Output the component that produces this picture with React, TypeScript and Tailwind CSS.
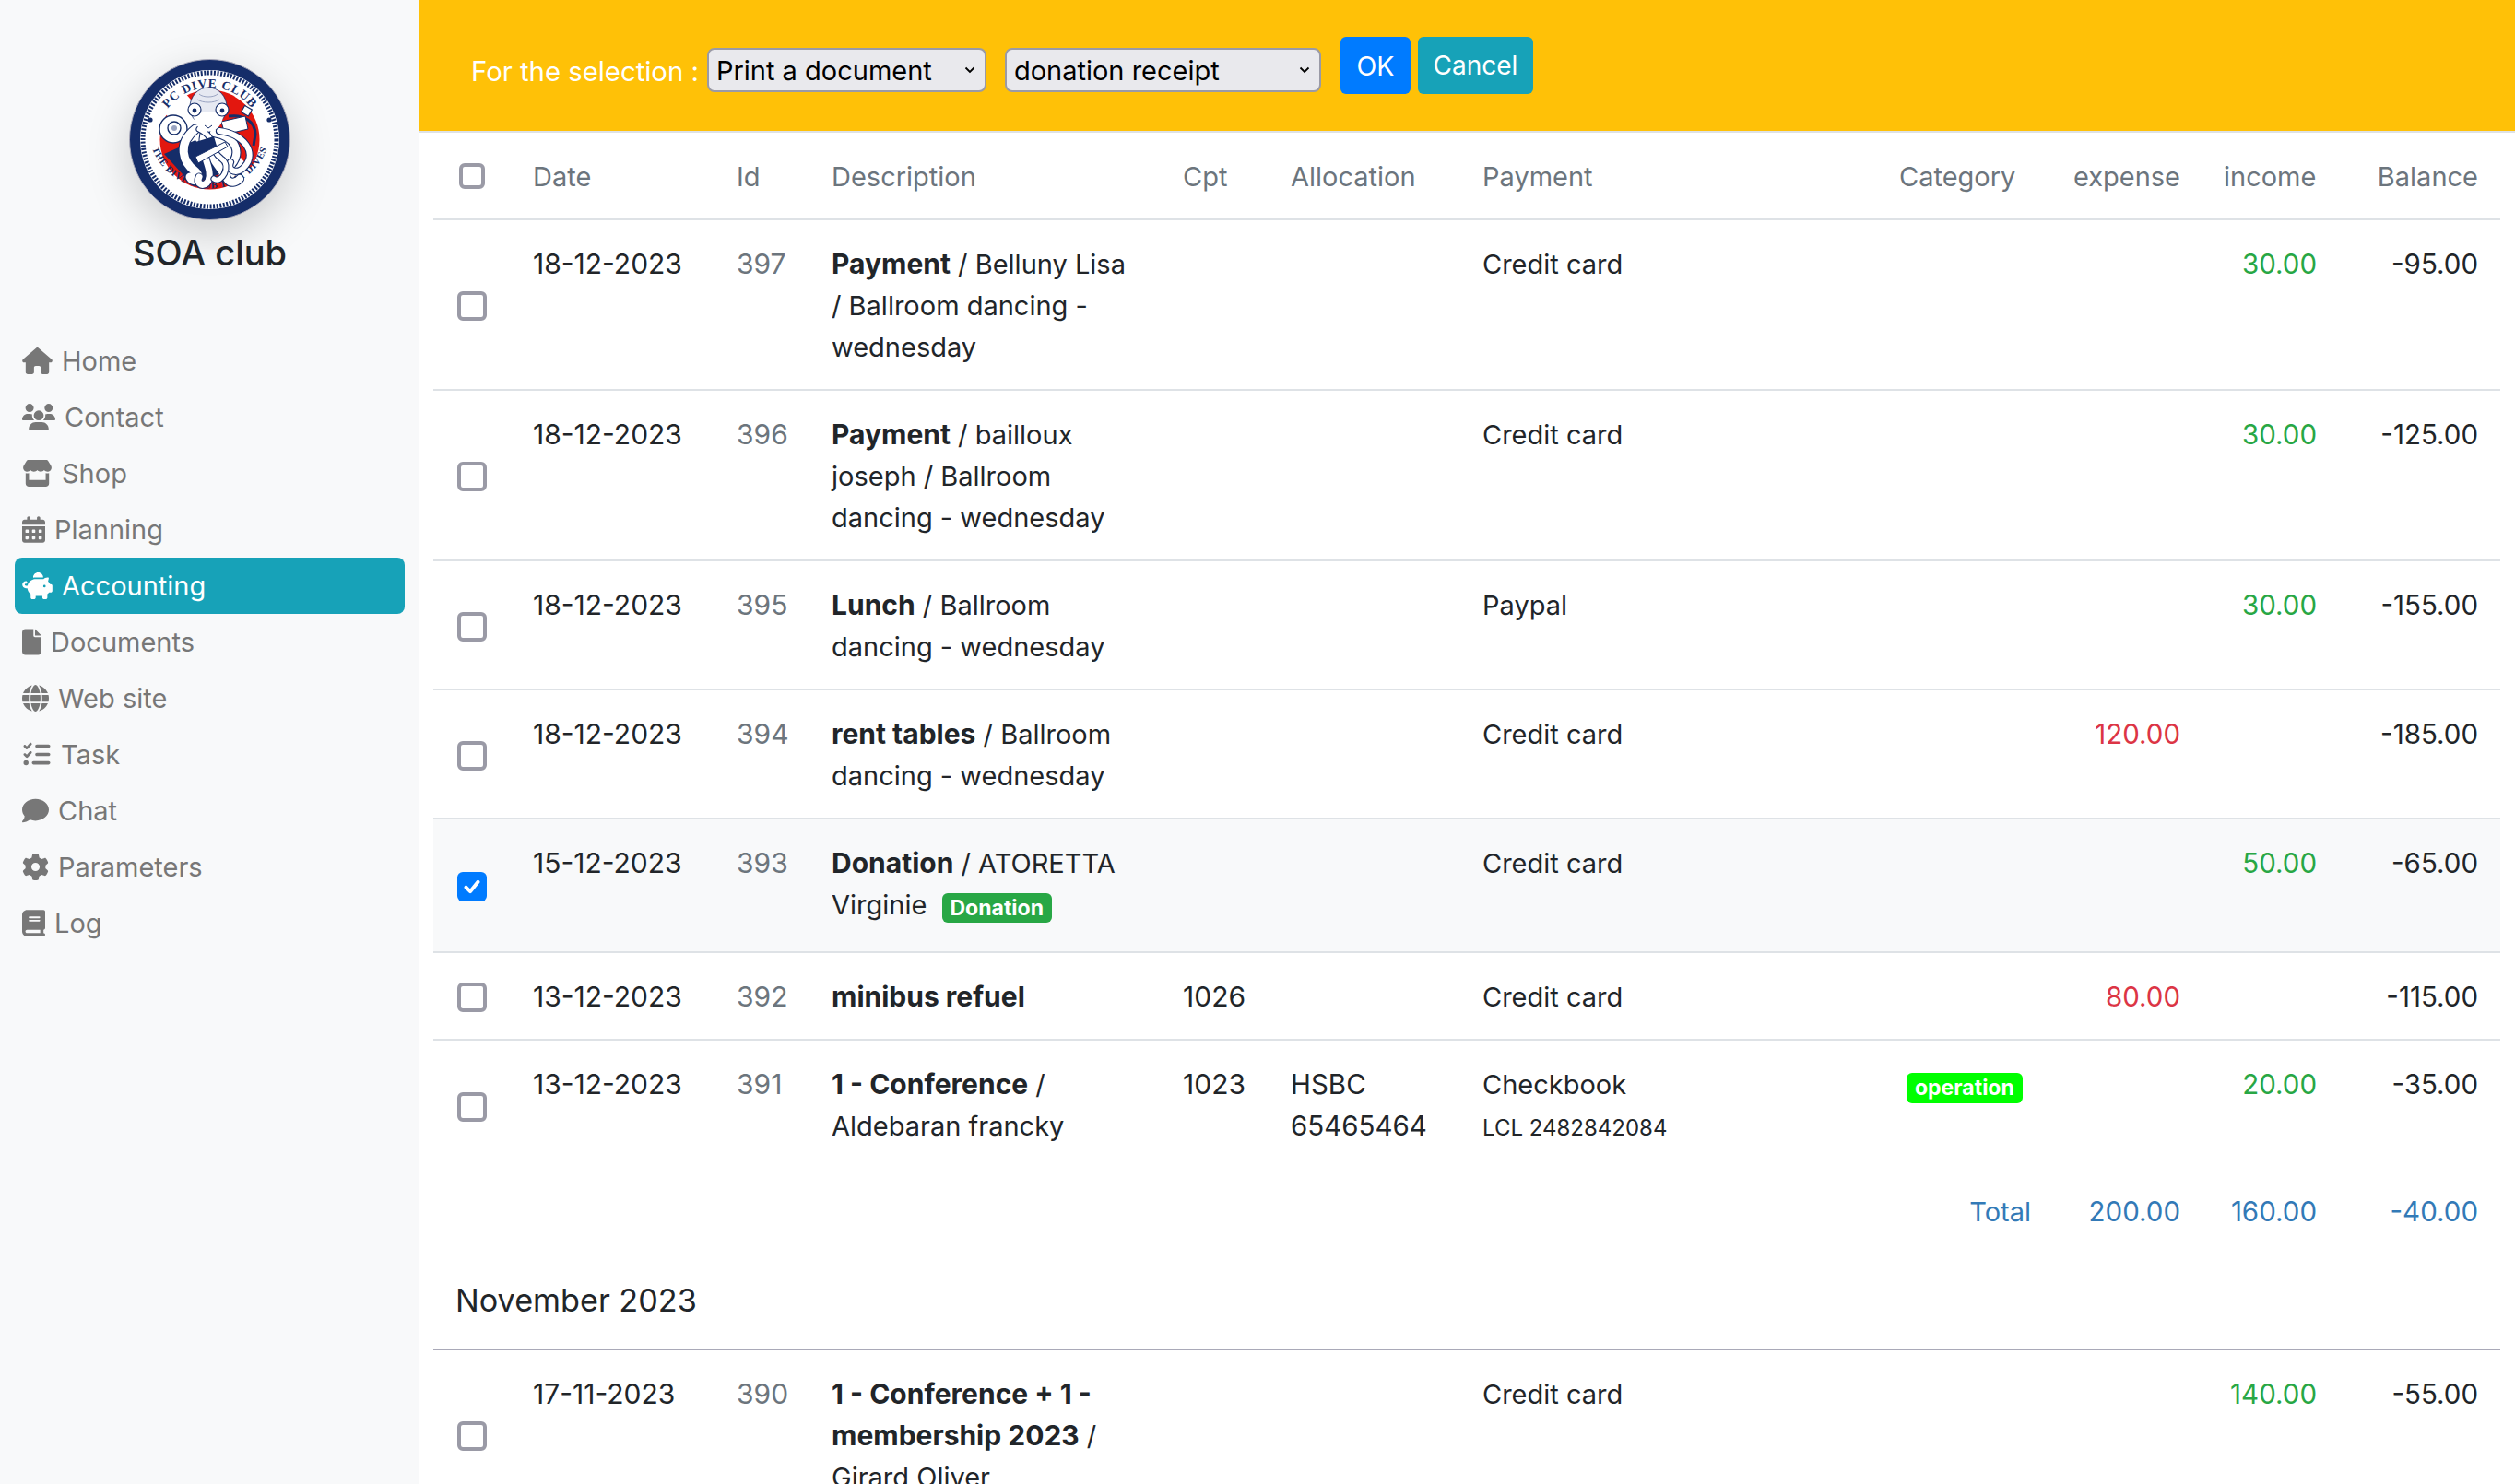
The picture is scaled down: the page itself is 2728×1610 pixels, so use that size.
import type { ReactNode } from "react";
import {
  FaHouse,
  FaUsers,
  FaStore,
  FaCalendarDays,
  FaPiggyBank,
  FaFile,
  FaGlobe,
  FaListCheck,
  FaComment,
  FaGear,
  FaBook,
} from "react-icons/fa6";

const NAV = [
  { label: "Home", icon: FaHouse, w: "w-[33px]" },
  { label: "Contact", icon: FaUsers, w: "w-[36px]" },
  { label: "Shop", icon: FaStore, w: "w-[33px]" },
  { label: "Planning", icon: FaCalendarDays, w: "w-[25px]" },
  { label: "Accounting", icon: FaPiggyBank, w: "w-[33px]", active: true },
  { label: "Documents", icon: FaFile, w: "w-[21px]" },
  { label: "Web site", icon: FaGlobe, w: "w-[29px]" },
  { label: "Task", icon: FaListCheck, w: "w-[32px]" },
  { label: "Chat", icon: FaComment, w: "w-[29px]" },
  { label: "Parameters", icon: FaGear, w: "w-[29px]" },
  { label: "Log", icon: FaBook, w: "w-[25px]" },
];

type Row = {
  date: string;
  id: number;
  desc: ReactNode;
  cpt?: string;
  alloc?: ReactNode;
  pay: ReactNode;
  cat?: ReactNode;
  expense?: string;
  income?: string;
  balance: string;
  checked?: boolean;
  noBorder?: boolean;
};

const B = "text-[30px] font-bold";
const CELL = "px-[24px] pt-[25px] pb-[23px]";
const NUM = "pl-[24px] pr-[23px] pt-[25px] pb-[23px] text-right text-[29.5px]";
const BAL = "pl-[24px] pr-[24px] pt-[25px] pb-[23px] text-right text-[29.5px]";

const ROWS: Row[] = [
  { date: "18-12-2023", id: 397, desc: <><b className={B}>Payment</b> / Belluny Lisa / Ballroom dancing - wednesday</>, pay: "Credit card", income: "30.00", balance: "-95.00" },
  { date: "18-12-2023", id: 396, desc: <><b className={B}>Payment</b> / bailloux joseph / Ballroom dancing - wednesday</>, pay: "Credit card", income: "30.00", balance: "-125.00" },
  { date: "18-12-2023", id: 395, desc: <><b className={B}>Lunch</b> / Ballroom dancing - wednesday</>, pay: "Paypal", income: "30.00", balance: "-155.00" },
  { date: "18-12-2023", id: 394, desc: <><b className={B}>rent tables</b> / Ballroom dancing - wednesday</>, pay: "Credit card", expense: "120.00", balance: "-185.00" },
  {
    date: "15-12-2023",
    id: 393,
    desc: (
      <div className="pb-[5px]">
        <b className={B}>Donation</b> / ATORETTA Virginie{" "}
        <span className="ml-[8px] inline-block rounded-[6px] bg-[#28a745] px-[9px] align-[-1px] text-[23px] leading-[32px] font-bold text-white">Donation</span>
      </div>
    ),
    pay: "Credit card",
    income: "50.00",
    balance: "-65.00",
    checked: true,
  },
  { date: "13-12-2023", id: 392, desc: <b className={B}>minibus refuel</b>, cpt: "1026", pay: "Credit card", expense: "80.00", balance: "-115.00" },
  {
    date: "13-12-2023",
    id: 391,
    desc: <><b className={B}>1 - Conference</b> / Aldebaran francky</>,
    cpt: "1023",
    alloc: <>HSBC<br />65465464</>,
    pay: <>Checkbook<br /><span className="text-[24px]">LCL 2482842084</span></>,
    cat: <span className="inline-block rounded-[6px] bg-[#00ff00] px-[9px] align-[-1px] text-[23px] leading-[33px] font-bold text-white">operation</span>,
    income: "20.00",
    balance: "-35.00",
    noBorder: true,
  },
];

function Box({ checked, small }: { checked?: boolean; small?: boolean }) {
  return (
    <span className={`flex items-center justify-center rounded-[6px] ${small ? "h-[28px] w-[28px]" : "h-[32px] w-[32px]"} ${checked ? "bg-[#007bff]" : "border-[4px] border-[#9a9aa6] bg-white"}`}>
      {checked && (
        <svg viewBox="0 0 20 20" className="h-[26px] w-[26px]" fill="none" stroke="white" strokeWidth="3" strokeLinecap="round" strokeLinejoin="round">
          <path d="M5 10.5l3.5 3.5L15 6" />
        </svg>
      )}
    </span>
  );
}

function Tentacle({ d, w = 9 }: { d: string; w?: number }) {
  return (
    <>
      <path d={d} fill="none" stroke="#152d69" strokeWidth={w + 2.2} strokeLinecap="round" />
      <path d={d} fill="none" stroke="#ffffff" strokeWidth={w} strokeLinecap="round" />
    </>
  );
}

function Logo() {
  return (
    <svg viewBox="0 0 175 175" className="h-[175px] w-[175px]">
      <defs>
        <path id="arcTop" d="M 32 75 A 57 57 0 0 1 143 75" />
        <path id="arcBottom" d="M 21.5 82 A 66.5 66.5 0 0 0 153.5 82" />
      </defs>
      <circle cx="87.5" cy="87.5" r="87" fill="#152d69" stroke="#a9a8b8" strokeWidth="1" />
      <circle cx="87.5" cy="87.5" r="75.5" fill="#ffffff" />
      <circle cx="87.5" cy="87.5" r="72.5" fill="none" stroke="#152d69" strokeWidth="5" strokeDasharray="2 1.6" />
      <circle cx="87.5" cy="87.5" r="54" fill="#e3170f" />
      <path d="M38 58 L60 36 L134 122 L112 142 Z" fill="#ffffff" />
      <path d="M38 103 L72 88 L98 125 L68 136 Z" fill="#152d69" />
      <text fontFamily="'Liberation Serif', serif" fontWeight="700" fontSize="13.5" fill="#152d69" letterSpacing="0.8">
        <textPath href="#arcTop" startOffset="50%" textAnchor="middle">PC DIVE CLUB</textPath>
      </text>
      <text fontFamily="'Liberation Serif', serif" fontWeight="700" fontSize="10.5" fill="#152d69" letterSpacing="0.5">
        <textPath href="#arcBottom" startOffset="50%" textAnchor="middle">THE DIVE CLUB THAT DIVES</textPath>
      </text>
      <circle cx="23" cy="66" r="2.6" fill="#152d69" />
      <circle cx="152" cy="66" r="2.6" fill="#152d69" />
      <circle cx="48" cy="76" r="15" fill="#ffffff" stroke="#152d69" strokeWidth="1.4" />
      <circle cx="49" cy="75" r="7" fill="#ffffff" stroke="#152d69" strokeWidth="1.4" />
      <circle cx="49" cy="75" r="3" fill="#9aa4c2" />
      <path d="M108 62 C125 60 137 68 137 82 L135 94" fill="none" stroke="#152d69" strokeWidth="3" />
      <path d="M100 68 L126 62 L129 76 L104 82 Z" fill="#ffffff" stroke="#152d69" strokeWidth="1" />
      <rect x="123" y="52" width="9" height="8" fill="#ffffff" stroke="#152d69" strokeWidth="1.2" transform="rotate(30 127 56)" />
      <Tentacle d="M72 76 C52 92 58 112 72 122 C80 130 70 136 66 128" w={9} />
      <Tentacle d="M82 78 C74 102 92 118 86 132 C82 140 72 136 76 128" w={7} />
      <Tentacle d="M92 80 C116 84 124 102 108 118 C100 128 110 140 120 130" w={8} />
      <Tentacle d="M98 78 C126 82 138 102 126 116 C118 126 106 122 110 112" w={6} />
      <Tentacle d="M76 76 C96 86 86 98 100 108 C112 116 100 136 92 130" w={5} />
      <path d="M72 90 L92 84 L96 98 L74 110 Z" fill="#152d69" />
      <path d="M72 106 L104 90 L107 95 L75 113 Z" fill="#ffffff" stroke="#152d69" strokeWidth="1" />
      <ellipse cx="86" cy="52" rx="20" ry="21" fill="#e6e9f2" stroke="#152d69" strokeWidth="0.8" />
      <path d="M70 62 C72 84 100 84 102 62 C96 56 76 56 70 62 Z" fill="#ffffff" />
      <path d="M76 38 C80 42 92 42 96 38 M74 44 C80 48 92 48 98 44" fill="none" stroke="#9aa4c2" strokeWidth="1" />
      <circle cx="71" cy="55" r="7" fill="#ffffff" stroke="#152d69" strokeWidth="1.2" />
      <circle cx="101" cy="55" r="7" fill="#ffffff" stroke="#152d69" strokeWidth="1.2" />
      <circle cx="71" cy="56" r="2.4" fill="#152d69" />
      <circle cx="101" cy="56" r="2.4" fill="#152d69" />
      <path d="M82 72 L86 75 L90 72" fill="none" stroke="#152d69" strokeWidth="1" />
    </svg>
  );
}

function Select({ value, width }: { value: string; width: string }) {
  return (
    <span className={`relative inline-block ${width}`}>
      <select
        defaultValue={value}
        className="h-[48px] w-full appearance-none rounded-[8px] border-[2px] border-[#9a9aa6] bg-[#e9e9ed] pt-[2px] pl-[8px] text-[29px] leading-[40px] text-black"
      >
        <option>{value}</option>
      </select>
      <svg viewBox="0 0 12 8" className="pointer-events-none absolute top-[20px] right-[12px] h-[8px] w-[12px]" fill="none" stroke="black" strokeWidth="1.8">
        <path d="M1.5 1.5L6 6l4.5-4.5" />
      </svg>
    </span>
  );
}

export default function App() {
  return (
    <div className="flex h-screen overflow-hidden bg-white font-['Inter',sans-serif] text-[29px] leading-[45px] text-[#212529]">
      <aside className="w-[455px] shrink-0 bg-[#f8f9fa]">
        <div className="flex flex-col items-center pt-[64px]">
          <div className="rounded-full shadow-[0_16px_48px_rgba(0,0,0,0.175)]">
            <Logo />
          </div>
          <h1 className="mt-[11px] text-[38px] leading-[48px] font-medium">SOA club</h1>
        </div>
        <nav className="mt-[63px] flex flex-col px-[16px]">
          {NAV.map((n) => (
            <a
              key={n.label}
              className={`flex h-[61px] items-center gap-[10px] rounded-[8px] px-[8px] text-[29px] ${n.active ? "bg-[#17a2b8] text-white" : "text-[#777777]"}`}
            >
              <n.icon className={`h-[29px] shrink-0 ${n.w}`} />
              <span>{n.label}</span>
            </a>
          ))}
        </nav>
      </aside>

      <main className="min-w-0 flex-1">
        <div className="flex h-[144px] items-start border-b-2 border-[#dee2e6] bg-[#ffc107] pt-[40px] pl-[56px]">
          <span className="mt-[15px] mr-[9px] text-[29.3px] text-white">For the selection :</span>
          <div className="mt-[12px] flex gap-[20px]">
            <Select value="Print a document" width="w-[303px]" />
            <Select value="donation receipt" width="w-[343px]" />
          </div>
          <button className="ml-[21px] h-[62px] w-[76px] rounded-[6px] bg-[#007bff] text-[28.5px] text-white">OK</button>
          <button className="ml-[8px] h-[62px] w-[125px] rounded-[6px] bg-[#17a2b8] text-[28px] text-white">Cancel</button>
        </div>

        <div className="pr-[16px] pl-[15px]">
          <table className="w-[2242px] table-fixed">
            <colgroup>
              <col className="w-[84px]" />
              <col className="w-[221px]" />
              <col className="w-[103px]" />
              <col className="w-[381px]" />
              <col className="w-[117px]" />
              <col className="w-[208px]" />
              <col className="w-[452px]" />
              <col className="w-[192px]" />
              <col className="w-[160px]" />
              <col className="w-[148px]" />
              <col className="w-[176px]" />
            </colgroup>
            <thead>
              <tr className="border-b-2 border-[#dee2e6] text-[#6c757d]">
                <th className="py-[24px] pl-[28px] font-normal"><Box small /></th>
                {["Date", "Id", "Description", "Cpt", "Allocation", "Payment", "Category"].map((h) => (
                  <th key={h} className={`${CELL} text-left font-normal`}>{h}</th>
                ))}
                <th className="pt-[25px] pr-[23px] pb-[23px] text-right font-normal">expense</th>
                <th className={`${CELL} text-right font-normal`}>income</th>
                <th className={`${CELL} text-right font-normal`}>Balance</th>
              </tr>
            </thead>
            <tbody>
              {ROWS.map((r) => (
                <tr key={r.id} className={`align-top ${r.noBorder ? "" : "border-b-2 border-[#dee2e6]"} ${r.checked ? "bg-[#f8f9fa]" : ""}`}>
                  <td className="pt-[3px] pl-[26px] align-middle"><Box checked={r.checked} /></td>
                  <td className={`${CELL} text-[30px]`}>{r.date}</td>
                  <td className={`${CELL} text-[30px] text-[#6c757d]`}>{r.id}</td>
                  <td className={CELL}>{r.desc}</td>
                  <td className={`${CELL} text-[30px]`}>{r.cpt}</td>
                  <td className={`${CELL} pr-0 text-[29.5px]`}>{r.alloc}</td>
                  <td className={CELL}>{r.pay}</td>
                  <td className={`${CELL} pl-[32px]`}>{r.cat}</td>
                  <td className={`${NUM} text-[#dc3545]`}>{r.expense}</td>
                  <td className={`${NUM} text-[#28a745]`}>{r.income}</td>
                  <td className={BAL}>{r.balance}</td>
                </tr>
              ))}
              <tr className="text-[#337ab7]">
                <td colSpan={7} />
                <td className="pt-[23px] pr-[25px] pb-[25px] pl-[24px] text-right">Total</td>
                <td className="pt-[23px] pr-[23px] pb-[25px] pl-[24px] text-right text-[29.5px]">200.00</td>
                <td className="pt-[23px] pr-[23px] pb-[25px] pl-[24px] text-right text-[29.5px]">160.00</td>
                <td className="pt-[23px] pr-[24px] pb-[25px] pl-[24px] text-right text-[29.5px]">-40.00</td>
              </tr>
              <tr className="border-b-2 border-[#a9a9b8]">
                <td colSpan={11} className="pt-[26px] pb-[29px] pl-[24px] text-[34.2px] leading-[46px]">November 2023</td>
              </tr>
              <tr className="align-top">
                <td className="pt-[3px] pl-[26px] align-middle"><Box /></td>
                <td className={`${CELL} text-[30px]`}>17-11-2023</td>
                <td className={`${CELL} text-[30px] text-[#6c757d]`}>390</td>
                <td className={CELL}><b className={B}>1 - Conference + 1 - membership 2023</b> / Girard Oliver</td>
                <td className={CELL} />
                <td className={CELL} />
                <td className={CELL}>Credit card</td>
                <td className={CELL} />
                <td className={CELL} />
                <td className={`${NUM} text-[#28a745]`}>140.00</td>
                <td className={BAL}>-55.00</td>
              </tr>
            </tbody>
          </table>
        </div>
      </main>
    </div>
  );
}
